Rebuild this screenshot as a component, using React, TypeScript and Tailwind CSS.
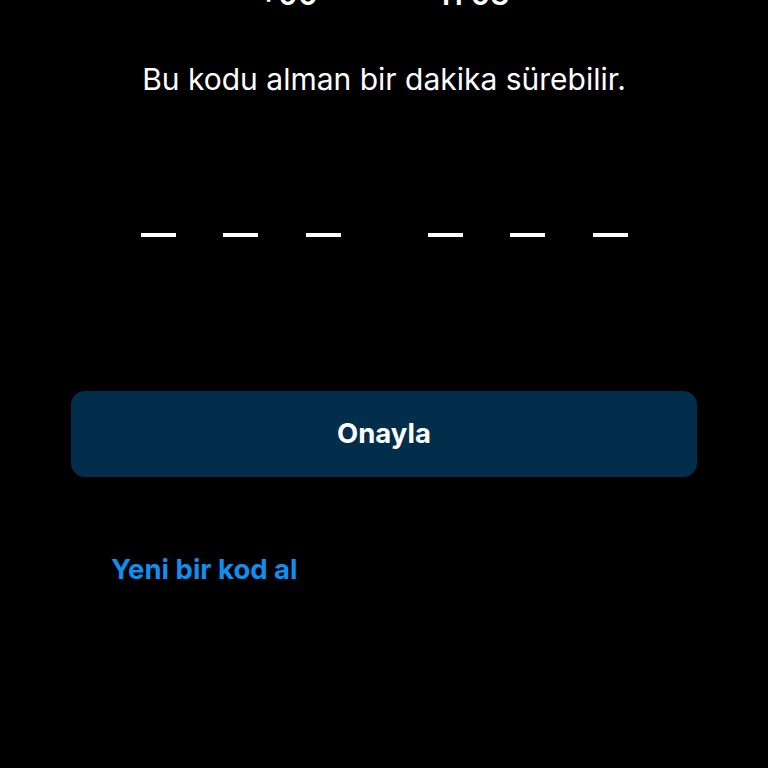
export default function App() {
  const dash = <div className="w-[35px] h-[4px] bg-white" />;
  return (
    <div
      className="w-full h-screen bg-black overflow-hidden flex flex-col items-center"
      style={{ fontFamily: 'Inter, "Noto Sans", sans-serif' }}
    >
      <div className="mt-[-21px] h-[31px] text-[30px] leading-[31px] font-semibold text-white whitespace-pre">
        {"+90 *** *** 11 03"}
      </div>
      <p className="mt-[51px] text-[30px] leading-[36px] text-white">
        Bu kodu alman bir dakika sürebilir.
      </p>
      <div className="mt-[136px] flex items-center">
        <div className="flex gap-[47.5px]">
          {dash}
          {dash}
          {dash}
        </div>
        <div className="w-[87px]" />
        <div className="flex gap-[47.5px]">
          {dash}
          {dash}
          {dash}
        </div>
      </div>
      <div className="self-stretch px-[71px] mt-[154px]">
        <button className="w-full h-[86px] rounded-[14px] bg-[#022d4b] text-white text-[27.5px] font-bold">
          Onayla
        </button>
      </div>
      <div className="self-stretch px-[111px] mt-[77px]">
        <span className="text-[27.5px] leading-[30px] font-bold text-[#0f8ff0]">Yeni bir kod al</span>
      </div>
    </div>
  );
}
